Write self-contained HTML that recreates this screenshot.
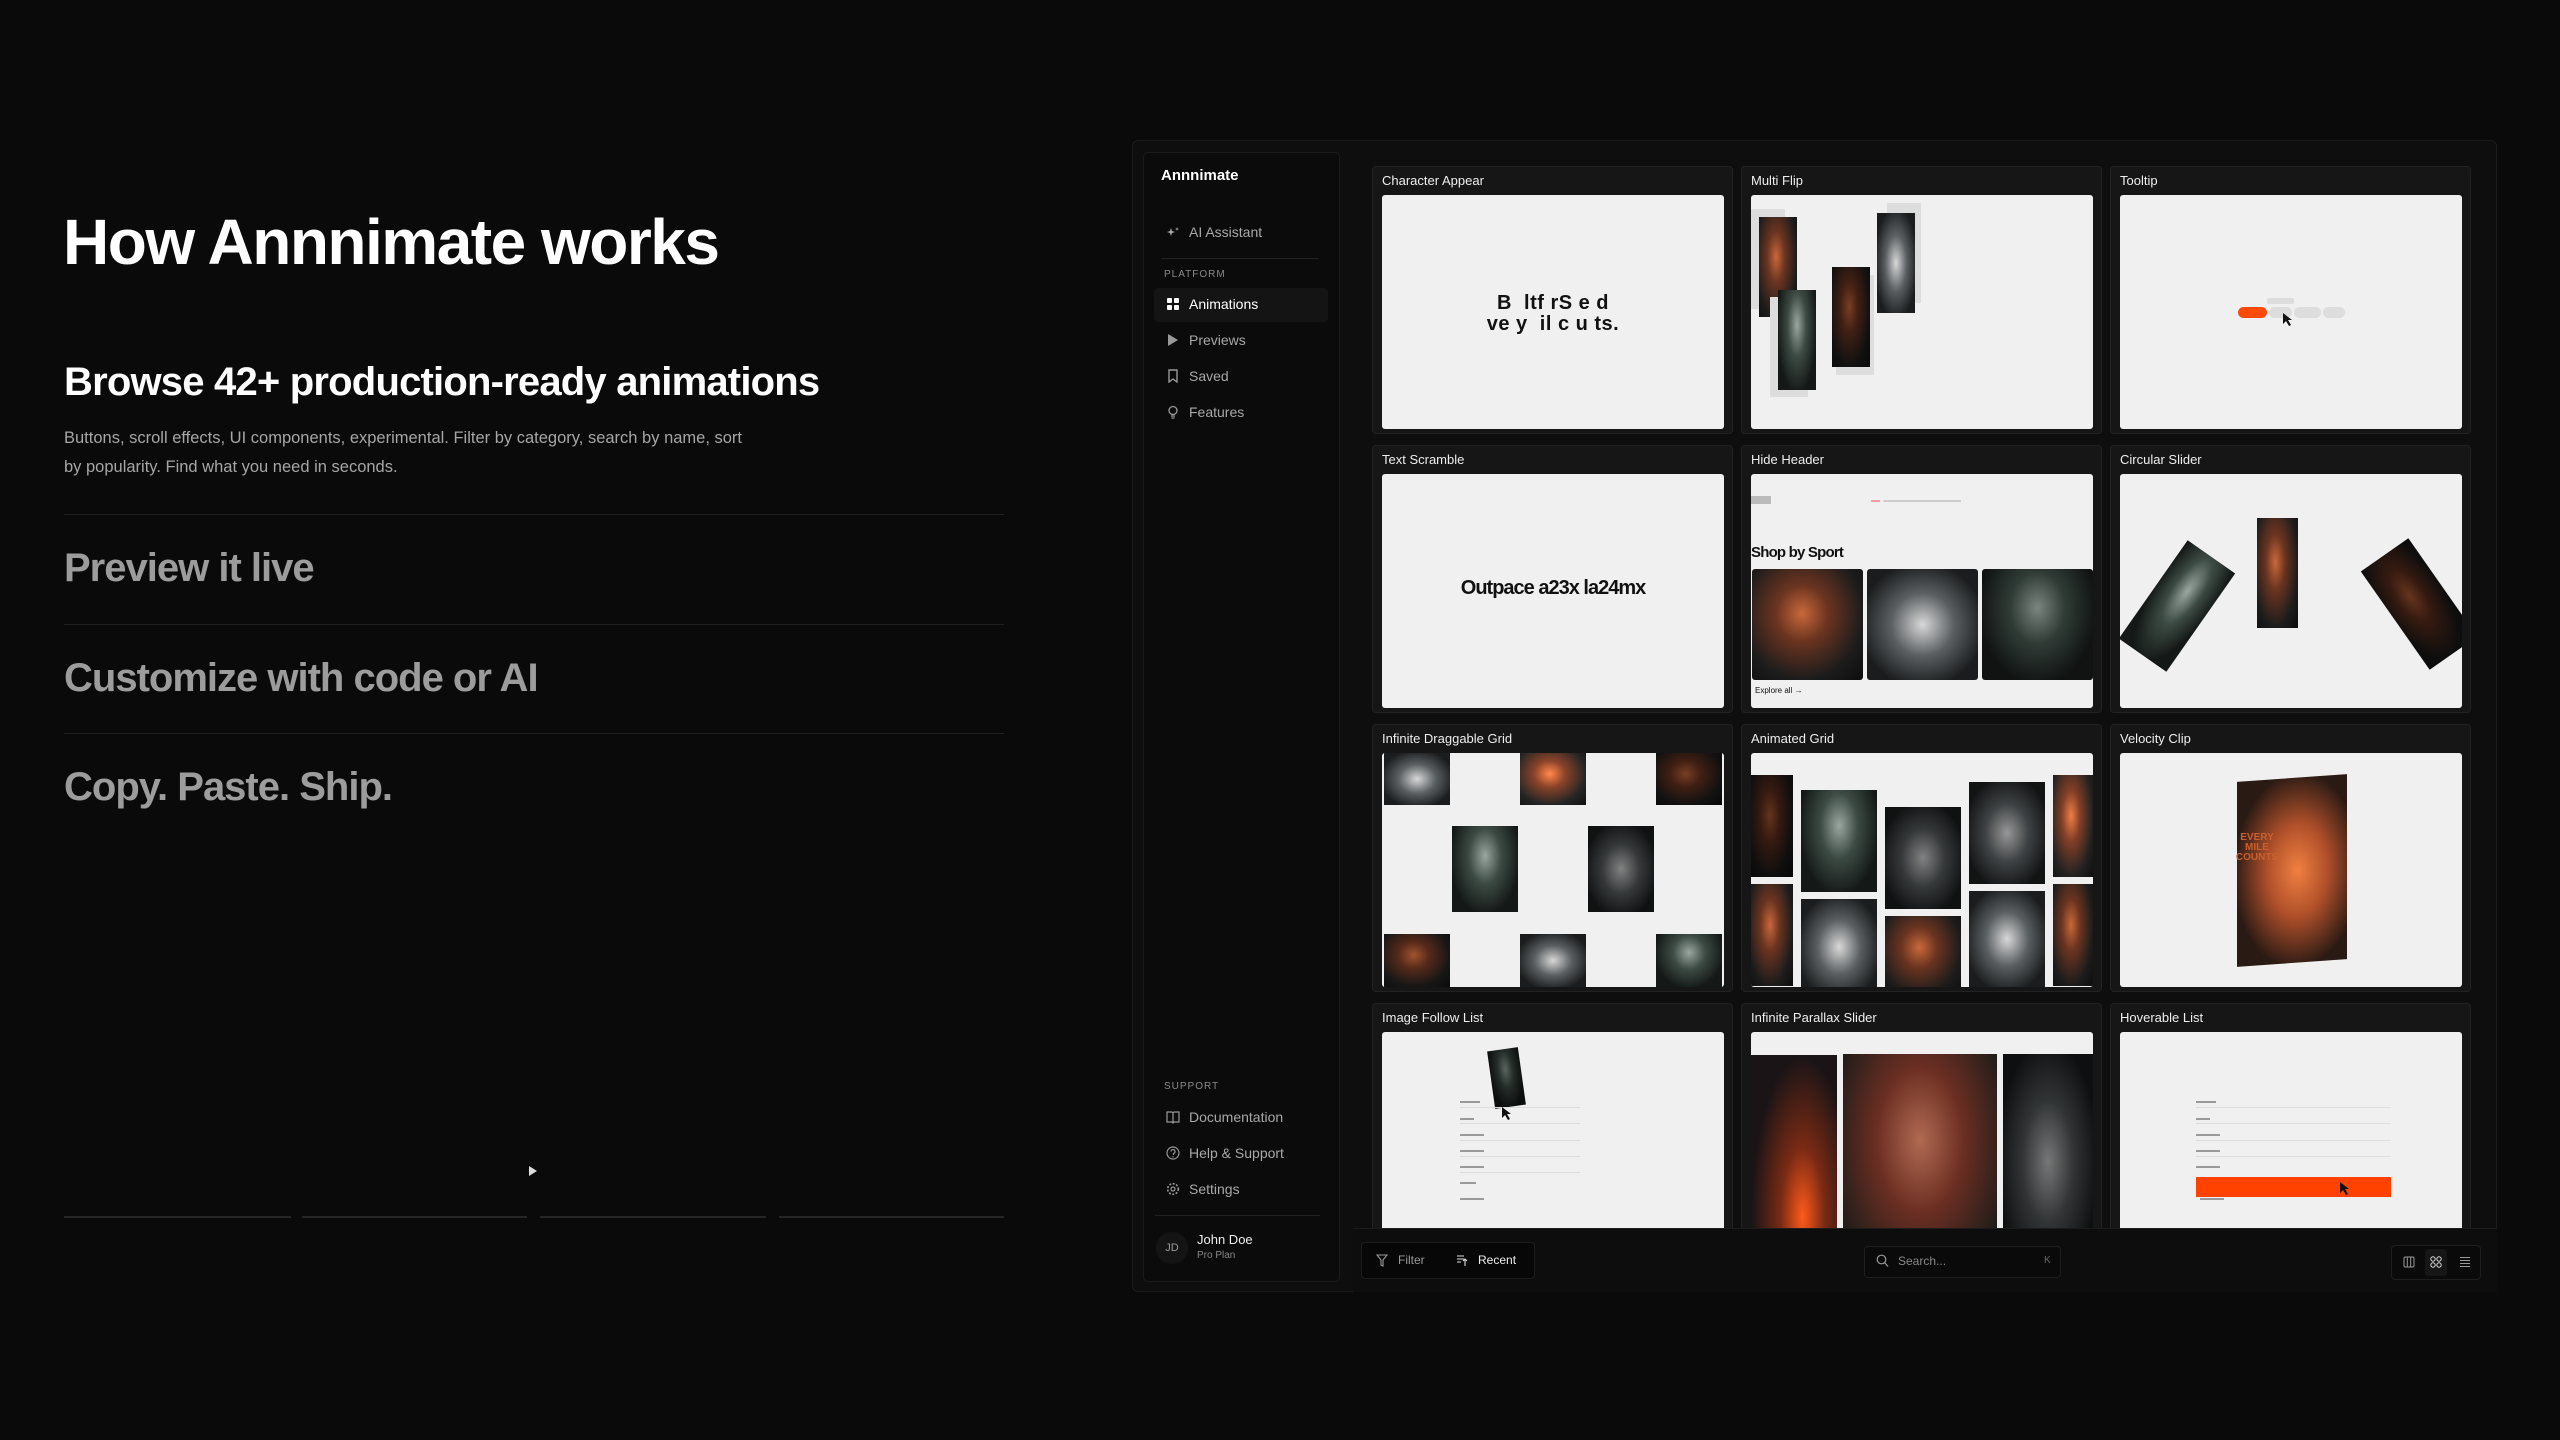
<!DOCTYPE html>
<html><head><meta charset="utf-8"><style>
*{margin:0;padding:0;box-sizing:border-box}
body{width:2560px;height:1440px;background:#0a0a0a;font-family:"Liberation Sans",sans-serif;color:#fff;position:relative;overflow:hidden}
.a{position:absolute}
h1{position:absolute;left:63px;top:205px;font-size:64px;font-weight:700;letter-spacing:-1.5px;white-space:nowrap}
.h2{left:64px;top:360px;font-size:40px;font-weight:700;letter-spacing:-0.8px;white-space:nowrap}
.p{left:64px;top:424px;font-size:16.5px;line-height:29px;color:#a6a6a6;width:680px}
.hr{left:64px;width:940px;height:1px;background:#1f1f1f}
.st{left:64px;font-size:40px;font-weight:700;color:#9c9c9c;letter-spacing:-1px;white-space:nowrap}
.bar{top:1216px;height:2px;background:#262626}
.panel{left:1132px;top:140px;width:1365px;height:1152px;background:#0e0e0e;border:1px solid #1c1c1c;border-radius:6px;overflow:hidden}
.side{left:1143px;top:152px;width:197px;height:1130px;background:#0b0b0b;border:1px solid #1b1b1b;border-radius:5px}
.si{left:1189px;font-size:14px;color:#a8a8a8;white-space:nowrap}
.ic{left:1166px;width:14px;height:14px}
.lab{left:1164px;font-size:10px;color:#8a8a8a;letter-spacing:1px}
.card{position:absolute;width:361px;height:268px;background:#161616;border:1px solid #222;border-radius:4px;overflow:hidden}
.card .t{position:absolute;left:9px;top:6px;font-size:13px;color:#eee;white-space:nowrap}
.pv{position:absolute;left:9px;top:28px;width:342px;height:234px;background:#f0f0f0;border-radius:3px;overflow:hidden}
.ph{position:absolute;background:radial-gradient(ellipse at 45% 40%,#c9683a 0%,#6b3420 30%,#1c1c1c 70%,#0d0d0d 100%)}
.ph2{position:absolute;background:radial-gradient(ellipse at 50% 35%,#9aa6a0 0%,#3c4a44 35%,#141816 75%)}
.ph3{position:absolute;background:radial-gradient(ellipse at 50% 50%,#d8d8d8 0%,#5a5f62 40%,#1a1c1d 80%)}
.ln{position:absolute;height:1px;background:#ddd}
.tb{position:absolute;top:1228px;left:1353px;width:1144px;height:64px;background:#0d0d0d;border-top:1px solid #1c1c1c}
</style></head><body>
<h1>How Annnimate works</h1>
<div class="a h2">Browse 42+ production-ready animations</div>
<div class="a p">Buttons, scroll effects, UI components, experimental. Filter by category, search by name, sort by popularity. Find what you need in seconds.</div>
<div class="a hr" style="top:514px"></div>
<div class="a st" style="top:546px">Preview it live</div>
<div class="a hr" style="top:624px"></div>
<div class="a st" style="top:656px">Customize with code or AI</div>
<div class="a hr" style="top:733px"></div>
<div class="a st" style="top:765px">Copy. Paste. Ship.</div>
<svg class="a" style="left:528px;top:1166px" width="10" height="10"><path d="M1 0L9 5L1 10Z" fill="#ddd"/></svg>
<div class="a bar" style="left:64px;width:227px"></div>
<div class="a bar" style="left:302px;width:225px"></div>
<div class="a bar" style="left:540px;width:226px"></div>
<div class="a bar" style="left:779px;width:225px"></div>

<div class="a panel"></div>
<div class="a side"></div>
<div class="a" style="left:1161px;top:167px;font-size:15px;font-weight:700">Annnimate</div>
<svg class="a ic" style="top:225px" viewBox="0 0 14 14"><path d="M5 3L6 6L9 7L6 8L5 11L4 8L1 7L4 6Z M11 2l.5 1.5L13 4l-1.5.5L11 6l-.5-1.5L9 4l1.5-.5Z" fill="#aaa"/></svg>
<div class="a si" style="top:224px">AI Assistant</div>
<div class="a" style="left:1161px;top:258px;width:158px;height:1px;background:#222"></div>
<div class="a lab" style="top:269px">PLATFORM</div>
<div class="a" style="left:1154px;top:288px;width:174px;height:34px;background:#141414;border-radius:4px"></div>
<svg class="a ic" style="top:297px" viewBox="0 0 14 14"><rect x="1" y="1" width="5" height="5" rx="1" fill="#fff"/><rect x="8" y="1" width="5" height="5" rx="1" fill="#fff"/><rect x="1" y="8" width="5" height="5" rx="1" fill="#fff"/><rect x="8" y="8" width="5" height="5" rx="1" fill="#fff"/></svg>
<div class="a si" style="top:296px;color:#fff">Animations</div>
<svg class="a ic" style="top:333px" viewBox="0 0 14 14"><path d="M2 1L12 7L2 13Z" fill="#999"/></svg>
<div class="a si" style="top:332px">Previews</div>
<svg class="a ic" style="top:369px" viewBox="0 0 14 14"><path d="M3 1H11V13L7 10L3 13Z" fill="none" stroke="#999" stroke-width="1.4"/></svg>
<div class="a si" style="top:368px">Saved</div>
<svg class="a ic" style="top:405px" viewBox="0 0 14 14"><circle cx="7" cy="5.5" r="4" fill="none" stroke="#999" stroke-width="1.3"/><path d="M5 11H9M5.5 13H8.5" stroke="#999" stroke-width="1.3"/></svg>
<div class="a si" style="top:404px">Features</div>
<div class="a lab" style="top:1081px">SUPPORT</div>
<svg class="a ic" style="top:1110px" viewBox="0 0 14 14"><path d="M1 2H6L7 3L8 2H13V12H8L7 13L6 12H1Z M7 3V13" fill="none" stroke="#999" stroke-width="1.2"/></svg>
<div class="a si" style="top:1109px">Documentation</div>
<svg class="a ic" style="top:1146px" viewBox="0 0 14 14"><circle cx="7" cy="7" r="6" fill="none" stroke="#999" stroke-width="1.2"/><path d="M5 5.5a2 2 0 1 1 2.5 2V9" fill="none" stroke="#999" stroke-width="1.2"/><circle cx="7" cy="10.8" r=".7" fill="#999"/></svg>
<div class="a si" style="top:1145px">Help &amp; Support</div>
<svg class="a ic" style="top:1182px" viewBox="0 0 14 14"><circle cx="7" cy="7" r="2" fill="none" stroke="#999" stroke-width="1.2"/><circle cx="7" cy="7" r="5.3" fill="none" stroke="#999" stroke-width="1.6" stroke-dasharray="2 1.5"/></svg>
<div class="a si" style="top:1181px">Settings</div>
<div class="a" style="left:1155px;top:1215px;width:165px;height:1px;background:#222"></div>
<div class="a" style="left:1156px;top:1232px;width:32px;height:32px;border-radius:50%;background:#141414;font-size:11px;color:#999;text-align:center;line-height:32px">JD</div>
<div class="a" style="left:1197px;top:1232px;font-size:13px;color:#eee">John Doe</div>
<div class="a" style="left:1197px;top:1250px;font-size:10px;color:#888">Pro Plan</div>

<!-- row 1 -->
<div class="card" style="left:1372px;top:166px"><div class="t">Character Appear</div><div class="pv">
<div class="a" style="left:0;width:342px;top:98px;text-align:center;font-size:20px;font-weight:700;color:#111;line-height:21px;letter-spacing:0.5px">B&nbsp; ltf rS e d<br>ve y &nbsp;il c u ts.</div></div></div>
<div class="card" style="left:1741px;top:166px"><div class="t">Multi Flip</div><div class="pv">
<div class="a" style="left:0;top:14px;width:34px;height:100px;background:#ddd"></div>
<div class="ph" style="left:8px;top:22px;width:38px;height:100px"></div>
<div class="a" style="left:19px;top:102px;width:38px;height:100px;background:#ddd"></div>
<div class="ph2" style="left:27px;top:95px;width:38px;height:100px"></div>
<div class="a" style="left:85px;top:80px;width:38px;height:100px;background:#ddd"></div>
<div class="ph" style="left:81px;top:72px;width:38px;height:100px;filter:brightness(.6)"></div>
<div class="a" style="left:136px;top:8px;width:34px;height:100px;background:#ddd"></div>
<div class="ph3" style="left:126px;top:18px;width:38px;height:100px"></div>
</div></div>
<div class="card" style="left:2110px;top:166px"><div class="t">Tooltip</div><div class="pv">
<div class="a" style="left:147px;top:103px;width:27px;height:6px;background:#ddd;border-radius:2px"></div>
<div class="a" style="left:118px;top:112px;width:29px;height:11px;background:#ff4a0a;border-radius:6px"></div>
<div class="a" style="left:149px;top:112px;width:23px;height:11px;background:#ddd;border-radius:6px"></div>
<div class="a" style="left:174px;top:112px;width:27px;height:11px;background:#ddd;border-radius:6px"></div>
<div class="a" style="left:203px;top:112px;width:22px;height:11px;background:#ddd;border-radius:6px"></div>
<svg class="a" style="left:163px;top:118px" width="12" height="14"><path d="M0 0L0 11L3 8L6 13L8 12L5 7L9 7Z" fill="#111"/></svg>
</div></div>
<!-- row 2 -->
<div class="card" style="left:1372px;top:445px"><div class="t">Text Scramble</div><div class="pv">
<div class="a" style="left:0;width:342px;top:103px;text-align:center;font-size:20px;font-weight:700;color:#111;letter-spacing:-1px">Outpace a23x la24mx</div></div></div>
<div class="card" style="left:1741px;top:445px"><div class="t">Hide Header</div><div class="pv">
<div class="a" style="left:0;top:22px;width:20px;height:8px;background:#bbb"></div>
<div class="a" style="left:120px;top:26px;width:90px;height:2px;background:linear-gradient(90deg,#f9a 0 10%,transparent 10% 14%,#ccc 14%)"></div>
<div class="a" style="left:0;top:70px;font-size:15px;font-weight:700;color:#111;letter-spacing:-.8px">Shop by Sport</div>
<div class="ph" style="left:1px;top:95px;width:111px;height:111px;border-radius:3px"></div>
<div class="ph3" style="left:116px;top:95px;width:111px;height:111px;border-radius:3px"></div>
<div class="ph2" style="left:231px;top:95px;width:111px;height:111px;border-radius:3px;filter:brightness(.8)"></div>
<div class="a" style="left:4px;top:212px;font-size:8px;color:#111">Explore all →</div>
</div></div>
<div class="card" style="left:2110px;top:445px"><div class="t">Circular Slider</div><div class="pv">
<div class="ph" style="left:137px;top:44px;width:41px;height:110px"></div>
<div class="ph2" style="left:28px;top:72px;width:58px;height:120px;transform:rotate(35deg)"></div>
<div class="ph" style="left:270px;top:70px;width:58px;height:120px;transform:rotate(-35deg);filter:brightness(.5)"></div>
</div></div>
<!-- row 3 -->
<div class="card" style="left:1372px;top:724px"><div class="t">Infinite Draggable Grid</div><div class="pv">
<div class="ph3" style="left:2px;top:0;width:66px;height:52px"></div>
<div class="ph" style="left:138px;top:0;width:66px;height:52px;filter:brightness(1.3)"></div>
<div class="ph" style="left:274px;top:0;width:66px;height:52px;filter:brightness(.6)"></div>
<div class="ph2" style="left:70px;top:73px;width:66px;height:86px"></div>
<div class="ph3" style="left:206px;top:73px;width:66px;height:86px;filter:brightness(.6)"></div>
<div class="ph" style="left:2px;top:181px;width:66px;height:53px;filter:brightness(.8)"></div>
<div class="ph3" style="left:138px;top:181px;width:66px;height:53px"></div>
<div class="ph2" style="left:274px;top:181px;width:66px;height:53px"></div>
</div></div>
<div class="card" style="left:1741px;top:724px"><div class="t">Animated Grid</div><div class="pv">
<div class="ph" style="left:0;top:22px;width:42px;height:102px;filter:brightness(.5)"></div>
<div class="ph" style="left:0;top:131px;width:42px;height:102px"></div>
<div class="ph2" style="left:50px;top:37px;width:76px;height:102px"></div>
<div class="ph3" style="left:50px;top:146px;width:76px;height:96px"></div>
<div class="ph3" style="left:134px;top:54px;width:76px;height:102px;filter:brightness(.6)"></div>
<div class="ph" style="left:134px;top:163px;width:76px;height:79px"></div>
<div class="ph3" style="left:218px;top:29px;width:76px;height:102px;filter:brightness(.7)"></div>
<div class="ph3" style="left:218px;top:138px;width:76px;height:96px"></div>
<div class="ph" style="left:302px;top:22px;width:40px;height:102px;filter:brightness(1.2)"></div>
<div class="ph" style="left:302px;top:131px;width:40px;height:102px"></div>
</div></div>
<div class="card" style="left:2110px;top:724px"><div class="t">Velocity Clip</div><div class="pv">
<div class="ph" style="left:117px;top:25px;width:110px;height:185px;transform:skewY(-4deg);background:radial-gradient(ellipse at 55% 50%,#f08040 0%,#b0502a 35%,#2a1a14 75%)"></div>
<div class="a" style="left:112px;top:80px;font-size:10px;line-height:10px;color:#c9602e;font-weight:700;text-align:center;width:50px">EVERY MILE COUNTS</div>
</div></div>
<!-- row 4 -->
<div class="card" style="left:1372px;top:1003px"><div class="t">Image Follow List</div><div class="pv">
<div class="ph2" style="left:109px;top:17px;width:31px;height:58px;transform:rotate(-8deg);filter:brightness(.6)"></div>
<div class="ln" style="left:78px;top:75px;width:120px"></div><div class="ln" style="left:78px;top:91px;width:120px"></div><div class="ln" style="left:78px;top:108px;width:120px"></div><div class="ln" style="left:78px;top:124px;width:120px"></div><div class="ln" style="left:78px;top:140px;width:120px"></div>
<div class="a" style="left:78px;top:69px;width:20px;height:2px;background:#999"></div><div class="a" style="left:78px;top:86px;width:14px;height:2px;background:#999"></div><div class="a" style="left:78px;top:102px;width:24px;height:2px;background:#999"></div><div class="a" style="left:78px;top:118px;width:24px;height:2px;background:#999"></div><div class="a" style="left:78px;top:134px;width:24px;height:2px;background:#999"></div><div class="a" style="left:78px;top:150px;width:16px;height:2px;background:#999"></div><div class="a" style="left:78px;top:166px;width:24px;height:2px;background:#999"></div>
<svg class="a" style="left:120px;top:75px" width="12" height="14"><path d="M0 0L0 11L3 8L6 13L8 12L5 7L9 7Z" fill="#111"/></svg>
</div></div>
<div class="card" style="left:1741px;top:1003px"><div class="t">Infinite Parallax Slider</div><div class="pv">
<div class="ph" style="left:0;top:23px;width:86px;height:215px;background:radial-gradient(ellipse at 60% 75%,#ff5a1a 0%,#7a2a14 30%,#1a1416 70%)"></div>
<div class="ph" style="left:92px;top:22px;width:154px;height:215px;background:radial-gradient(ellipse at 50% 40%,#b06a52 0%,#6b2e22 40%,#1e1c1a 85%)"></div>
<div class="ph3" style="left:252px;top:22px;width:90px;height:215px;filter:brightness(.55)"></div>
<div class="a" style="left:100px;top:205px;font-size:9px;color:#fff">Apparel</div>
<div class="a" style="left:258px;top:205px;font-size:9px;color:#fff">Running Shoes</div>
</div></div>
<div class="card" style="left:2110px;top:1003px"><div class="t">Hoverable List</div><div class="pv">
<div class="ln" style="left:76px;top:75px;width:195px"></div><div class="ln" style="left:76px;top:91px;width:195px"></div><div class="ln" style="left:76px;top:108px;width:195px"></div><div class="ln" style="left:76px;top:124px;width:195px"></div>
<div class="a" style="left:76px;top:69px;width:20px;height:2px;background:#999"></div><div class="a" style="left:76px;top:86px;width:14px;height:2px;background:#999"></div><div class="a" style="left:76px;top:102px;width:24px;height:2px;background:#999"></div><div class="a" style="left:76px;top:118px;width:24px;height:2px;background:#999"></div><div class="a" style="left:76px;top:134px;width:24px;height:2px;background:#999"></div>
<div class="a" style="left:76px;top:145px;width:195px;height:20px;background:#ff4200"></div>
<div class="a" style="left:80px;top:166px;width:24px;height:2px;background:#999"></div>
<svg class="a" style="left:220px;top:150px" width="12" height="14"><path d="M0 0L0 11L3 8L6 13L8 12L5 7L9 7Z" fill="#111"/></svg>
</div></div>

<div class="tb"></div>
<div class="a" style="left:1361px;top:1242px;width:174px;height:37px;background:#070707;border:1px solid #1c1c1c;border-radius:4px"></div>
<svg class="a" style="left:1376px;top:1254px" width="12" height="13"><path d="M1 1H11L7 6V12L5 11V6Z" fill="none" stroke="#999" stroke-width="1.1"/></svg>
<div class="a" style="left:1398px;top:1253px;font-size:12px;color:#999">Filter</div>
<svg class="a" style="left:1456px;top:1254px" width="12" height="13"><path d="M1 2H8M1 5H8M1 8H5M9 12V5M7 7L9 5L11 7" fill="none" stroke="#ddd" stroke-width="1.1"/></svg>
<div class="a" style="left:1478px;top:1253px;font-size:12px;color:#eee">Recent</div>
<div class="a" style="left:1864px;top:1246px;width:197px;height:32px;background:#0a0a0a;border:1px solid #1e1e1e;border-radius:4px"></div>
<svg class="a" style="left:1876px;top:1254px" width="13" height="14"><circle cx="5.5" cy="5.5" r="4.3" fill="none" stroke="#999" stroke-width="1.2"/><path d="M8.5 8.5L12 12.5" stroke="#999" stroke-width="1.2"/></svg>
<div class="a" style="left:1898px;top:1254px;font-size:12px;color:#888">Search...</div>
<div class="a" style="left:2044px;top:1255px;font-size:10px;color:#666">K</div>
<div class="a" style="left:2391px;top:1245px;width:90px;height:35px;background:#0a0a0a;border:1px solid #1e1e1e;border-radius:4px"></div>
<div class="a" style="left:2425px;top:1249px;width:22px;height:27px;background:#161616;border-radius:3px"></div>
<svg class="a" style="left:2403px;top:1256px" width="12" height="12"><rect x="1" y="1" width="10" height="10" rx="1.5" fill="none" stroke="#999"/><path d="M4.3 1V11M7.7 1V11" stroke="#999"/></svg>
<svg class="a" style="left:2430px;top:1256px" width="12" height="12"><circle cx="3" cy="3" r="2.2" fill="none" stroke="#ddd"/><circle cx="9" cy="3" r="2.2" fill="none" stroke="#ddd"/><circle cx="3" cy="9" r="2.2" fill="none" stroke="#ddd"/><circle cx="9" cy="9" r="2.2" fill="none" stroke="#ddd"/></svg>
<svg class="a" style="left:2459px;top:1256px" width="12" height="12"><path d="M1 1.5H11M1 4.5H11M1 7.5H11M1 10.5H11" stroke="#999"/></svg>
</body></html>
